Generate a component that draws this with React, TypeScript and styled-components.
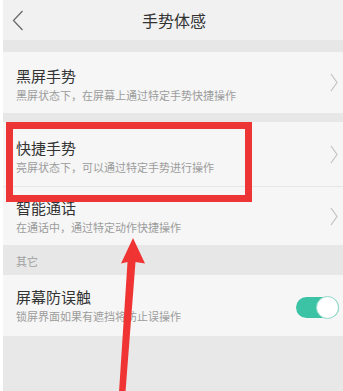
import styled, { createGlobalStyle } from "styled-components";

const GlobalStyle = createGlobalStyle`
  html, body {
    margin: 0;
    padding: 0;
    background: #e8e8e8;
  }
  body {
    font-family: "Noto Sans CJK SC", "Noto Sans", sans-serif;
  }
`;

const Page = styled.div`
  position: relative;
  width: 343px;
  height: 391px;
  overflow: hidden;
  box-sizing: border-box;
  border-left: 3px solid #ffffff;
  background: #e8e8e8;
  display: flex;
  flex-direction: column;
`;

const Header = styled.header`
  height: 40px;
  flex-shrink: 0;
  background: #f1f1f1;
  display: grid;
  grid-template-columns: 40px 1fr 40px;
  align-items: center;
`;

const BackButton = styled.div`
  display: flex;
  align-items: center;
  padding-left: 9px;
`;

const Title = styled.h1`
  margin: 0;
  text-align: center;
  font-size: 16px;
  font-weight: 400;
  color: #333333;
  padding-left: 2px;
`;

const Band = styled.div<{ $h: number }>`
  height: ${({ $h }) => $h}px;
  flex-shrink: 0;
  background: #e7e7e7;
  display: flex;
  align-items: center;
  padding-left: 13px;
  padding-top: 2px;
  box-sizing: border-box;
  font-size: 11px;
  color: #a0a0a0;
`;

const Row = styled.div<{ $h: number; $divider?: boolean }>`
  position: relative;
  height: ${({ $h }) => $h}px;
  flex-shrink: 0;
  background: #f6f6f6;
  display: flex;
  align-items: center;
  padding: 0 4px 0 13px;
  box-sizing: border-box;
  border-bottom: ${({ $divider }) => ($divider ? "1px solid #e6e6e6" : "none")};
`;

const RowText = styled.div<{ $shift: number }>`
  flex: 1;
  display: flex;
  flex-direction: column;
  gap: 3px;
  margin-top: ${({ $shift }) => $shift}px;
`;

const RowTitle = styled.div`
  font-size: 15px;
  line-height: 19px;
  color: #333333;
`;

const RowSub = styled.div`
  font-size: 11px;
  line-height: 14px;
  color: #9c9c9c;
`;

const Chevron = styled.div`
  width: 12px;
  display: flex;
  justify-content: flex-end;
  padding-right: 1px;
`;

const Toggle = styled.div`
  width: 43px;
  height: 21px;
  border-radius: 11px;
  background: #3cc3a6;
  position: relative;
  margin-top: 4px;
`;

const Knob = styled.div`
  position: absolute;
  right: 0;
  top: -1px;
  width: 23px;
  height: 23px;
  border-radius: 50%;
  background: #ffffff;
  box-sizing: border-box;
  border: 1px solid #8fd8c7;
`;

const Highlight = styled.div`
  position: absolute;
  left: 3px;
  top: 122px;
  width: 246px;
  height: 80px;
  box-sizing: border-box;
  border: 7px solid #ee3535;
  pointer-events: none;
`;

const Arrow = styled.svg`
  position: absolute;
  left: -3px;
  top: 0;
  pointer-events: none;
`;

function ChevronRight() {
  return (
    <svg width="8" height="19" viewBox="0 0 8 19">
      <path d="M1 1 L7 9.5 L1 18" fill="none" stroke="#c2c2c2" strokeWidth="1.2" />
    </svg>
  );
}

type Item = { title: string; sub: string; h: number; shift: number; divider?: boolean };

const gestureItems: Item[] = [
  { title: "快捷手势", sub: "亮屏状态下，可以通过特定手势进行操作", h: 65, shift: 4, divider: true },
  { title: "智能通话", sub: "在通话中，通过特定动作快捷操作", h: 58, shift: -1 },
];

export default function App() {
  return (
    <>
      <GlobalStyle />
      <Page>
        <Header>
          <BackButton>
            <svg width="12" height="21" viewBox="0 0 12 21">
              <path d="M10.5 1 L1.5 10.5 L10.5 20" fill="none" stroke="#6a6a6a" strokeWidth="1.3" />
            </svg>
          </BackButton>
          <Title>手势体感</Title>
          <span />
        </Header>
        <Band $h={12} />
        <Row $h={61}>
          <RowText $shift={2}>
            <RowTitle>黑屏手势</RowTitle>
            <RowSub>黑屏状态下，在屏幕上通过特定手势快捷操作</RowSub>
          </RowText>
          <Chevron>
            <ChevronRight />
          </Chevron>
        </Row>
        <Band $h={9} />
        {gestureItems.map((it) => (
          <Row key={it.title} $h={it.h} $divider={it.divider}>
            <RowText $shift={it.shift}>
              <RowTitle>{it.title}</RowTitle>
              <RowSub>{it.sub}</RowSub>
            </RowText>
            <Chevron>
              <ChevronRight />
            </Chevron>
          </Row>
        ))}
        <Band $h={30}>其它</Band>
        <Row $h={61}>
          <RowText $shift={-1}>
            <RowTitle>屏幕防误触</RowTitle>
            <RowSub>锁屏界面如果有遮挡将防止误操作</RowSub>
          </RowText>
          <Toggle>
            <Knob />
          </Toggle>
        </Row>
        <Highlight />
        <Arrow width="343" height="391" viewBox="0 0 343 391">
          <polygon
            points="119,392 127.5,262 121,263.5 133,238 145,263.5 135.5,262 125.5,392"
            fill="#f03434"
          />
        </Arrow>
      </Page>
    </>
  );
}
